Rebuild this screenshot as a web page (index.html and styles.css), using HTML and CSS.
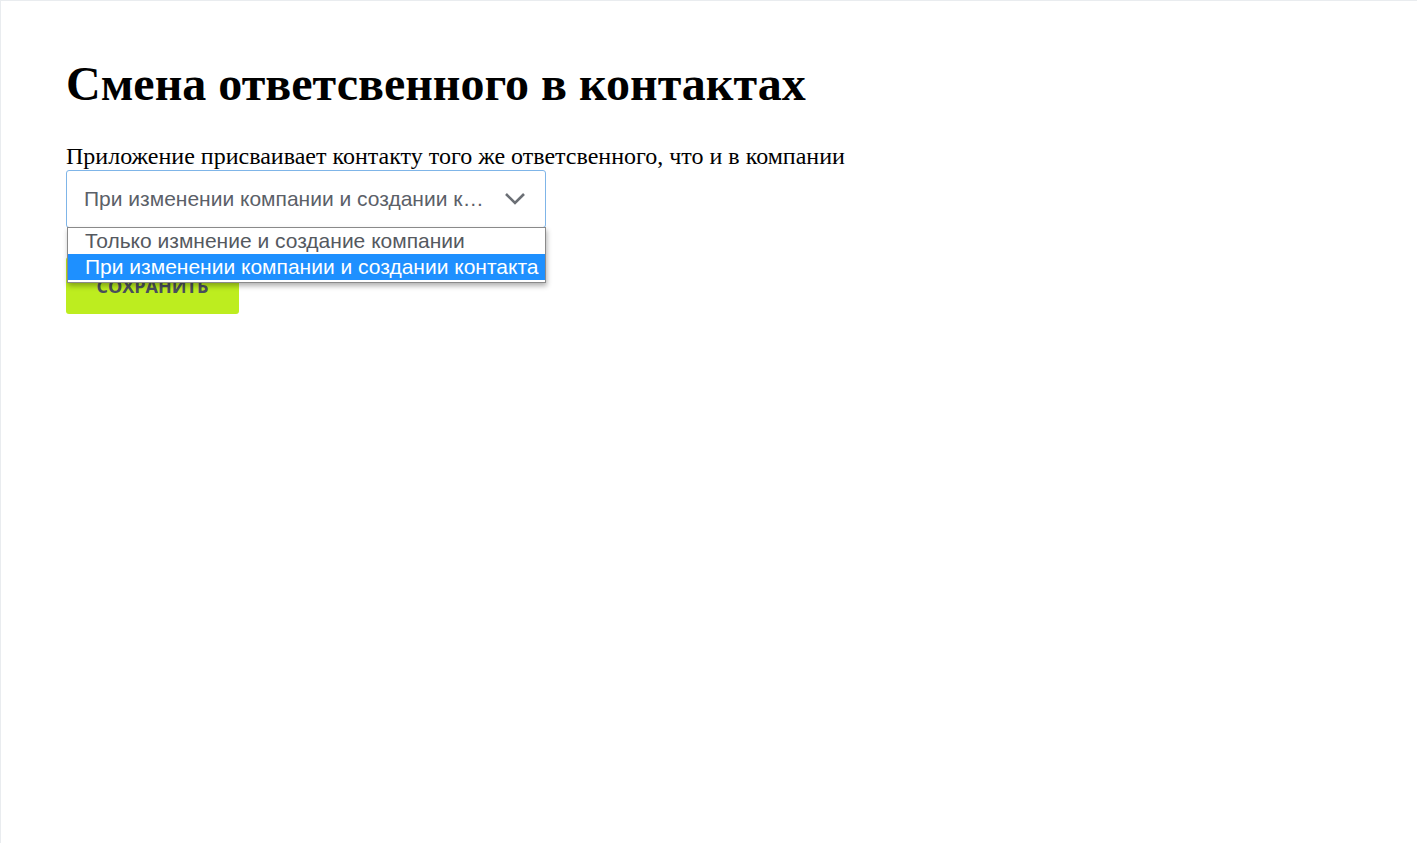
FILE: index.html
```html
<!DOCTYPE html>
<html lang="ru">
<head>
<meta charset="utf-8">
<title>Смена ответсвенного в контактах</title>
<link rel="stylesheet" href="styles.css">
</head>
<body>
<div class="frame">
  <main class="content">
    <h1 class="title">Смена ответсвенного в контактах</h1>
    <p class="desc">Приложение присваивает контакту того же ответсвенного, что и в компании</p>
    <div class="select-wrap">
      <div class="select">
        <span class="select-value">При изменении компании и создании контакта</span>
        <svg class="chev" width="22" height="14" viewBox="0 0 22 14"><path d="M2 2 L11 11 L20 2" fill="none" stroke="#6b6f75" stroke-width="2.6"/></svg>
      </div>
      <ul class="dropdown">
        <li class="opt">Только измнение и создание компании</li>
        <li class="opt opt-active">При изменении компании и создании контакта</li>
      </ul>
    </div>
    <button class="save">СОХРАНИТЬ</button>
  </main>
</div>
</body>
</html>
```

FILE: styles.css
```css
html, body {
  margin: 0;
  padding: 0;
  height: 100%;
  background: #fff;
}
.frame {
  box-sizing: border-box;
  height: 100%;
  border-top: 1px solid #e9ecef;
  border-left: 1px solid #e9ecef;
}
.content {
  padding: 0 0 0 65px;
  display: flex;
  flex-direction: column;
  align-items: flex-start;
  font-family: "Liberation Serif", "Times New Roman", serif;
  color: #000;
}
.title {
  margin: 47px 0 0;
  font-size: 48px;
  line-height: 72px;
  font-weight: bold;
}
.desc {
  margin: 22px 0 0;
  font-size: 24px;
  line-height: 28px;
}
.select-wrap {
  position: relative;
  width: 480px;
}
.select {
  box-sizing: border-box;
  height: 58px;
  border: 1px solid #7fb5e8;
  border-radius: 3px;
  display: flex;
  align-items: center;
  padding: 0 19px 0 17px;
  gap: 20px;
  font-family: "Liberation Sans", Arial, sans-serif;
  font-size: 21px;
  color: #5b6068;
}
.select-value {
  flex: 1;
  white-space: nowrap;
  overflow: hidden;
  text-overflow: ellipsis;
}
.chev {
  flex: none;
}
.dropdown {
  position: absolute;
  left: 1px;
  top: 57px;
  width: 479px;
  box-sizing: border-box;
  margin: 0;
  padding: 0;
  list-style: none;
  background: #fff;
  border: 1px solid #8a8a8a;
  box-shadow: 1px 3px 5px rgba(0,0,0,0.3);
  font-family: "Liberation Sans", Arial, sans-serif;
  font-size: 21px;
  z-index: 2;
}
.opt {
  padding: 0 0 0 17px;
  height: 26px;
  line-height: 26px;
  color: #55595f;
  white-space: nowrap;
}
.opt-active {
  background: #1e90ff;
  color: #fff;
  margin-bottom: 2px;
}
.save {
  margin-top: 29px;
  width: 173px;
  height: 57px;
  border: none;
  border-radius: 3px;
  background: #bded1f;
  color: #4a4f5c;
  font-family: "Open Sans", sans-serif;
  font-weight: bold;
  font-size: 18px;
  padding: 0;
}
```
